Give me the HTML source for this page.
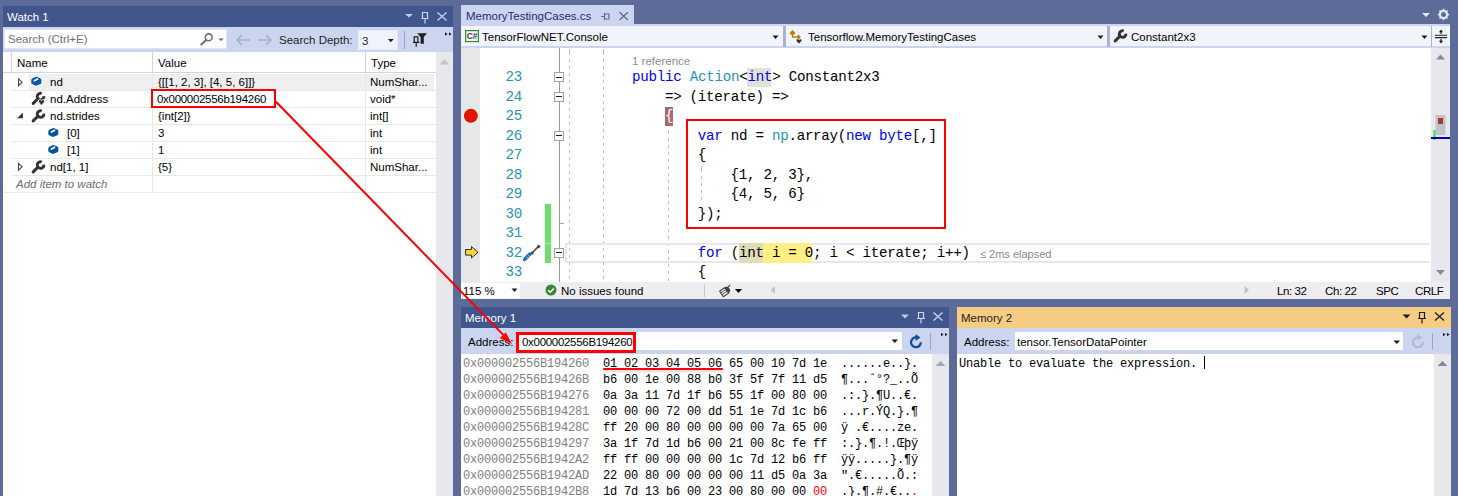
<!DOCTYPE html>
<html><head><meta charset="utf-8">
<style>
*{box-sizing:border-box}
html,body{margin:0;padding:0}
body{width:1458px;height:496px;position:relative;overflow:hidden;background:#5D6B99;font-family:"Liberation Sans",sans-serif;font-size:11.5px;color:#000}
.a{position:absolute}
.t{position:absolute;white-space:pre;line-height:14px}
.mono{font-family:"Liberation Mono",monospace}
.code{position:absolute;white-space:pre;font-family:"Liberation Mono",monospace;font-size:14.2px;letter-spacing:-0.27px;line-height:19px;color:#000}
.mem{position:absolute;white-space:pre;font-family:"Liberation Mono",monospace;font-size:12px;letter-spacing:-0.2px;line-height:17px;color:#000}
.kw{color:#0000FF}
.ty{color:#2B91AF}
.ln{position:absolute;white-space:pre;font-family:"Liberation Mono",monospace;font-size:14.2px;letter-spacing:-0.27px;line-height:19px;color:#2B91AF;text-align:right;width:60px;left:462px}
</style></head><body>

<!-- ================= WATCH PANEL ================= -->
<div class="a" style="left:3px;top:6px;width:450px;height:490px;background:#fff"></div>
<div class="a" style="left:3px;top:6px;width:450px;height:21px;background:#40568D"></div>
<div class="t" style="left:7px;top:10px;color:#fff">Watch 1</div>
<!-- toolbar -->
<div class="a" style="left:3px;top:27px;width:450px;height:25px;background:#CCD5F0"></div>
<div class="a" style="left:4px;top:29px;width:223px;height:20px;background:#fff;border:1px solid #E3E6F0"></div>
<div class="t" style="left:8px;top:32px;color:#717171">Search (Ctrl+E)</div>
<!-- header -->
<div class="a" style="left:3px;top:52px;width:433px;height:21px;background:#fff;border-bottom:1px solid #CCD5F0"></div>
<div class="a" style="left:11px;top:52px;width:1px;height:20px;background:#CCD5F0"></div>
<div class="a" style="left:152px;top:52px;width:1px;height:20px;background:#CCD5F0"></div>
<div class="a" style="left:365px;top:52px;width:1px;height:20px;background:#CCD5F0"></div>
<div class="t" style="left:17px;top:56px">Name</div>
<div class="t" style="left:158px;top:56px">Value</div>
<div class="t" style="left:371px;top:56px">Type</div>
<!-- scrollbar -->
<div class="a" style="left:436px;top:52px;width:17px;height:444px;background:#E8E8EC"></div>
<svg class="a" style="left:436px;top:52px" width="17" height="20"><path d="M3.5 12.5h10l-5-5z" fill="#C2C3C9"/></svg>

<!-- title icons -->
<svg class="a" style="left:400px;top:8px" width="53" height="18">
 <path d="M5 6h8l-4 3.6z" fill="#C2CAE2"/>
 <path d="M22.5 4.5h5v6h-5z M21.5 10.5h7 M25 10.5v5" stroke="#CCD3EA" stroke-width="1.2" fill="none"/>
 <path d="M37.5 4.5l9 8 M46.5 4.5l-9 8" stroke="#CCD3EA" stroke-width="1.3" fill="none"/>
</svg>
<!-- search icons -->
<svg class="a" style="left:196px;top:30px" width="260" height="20">
 <circle cx="12.7" cy="7.3" r="3.4" stroke="#717171" stroke-width="1.6" fill="none"/>
 <path d="M10.3 9.8l-5.5 5.3" stroke="#717171" stroke-width="2.1"/>
 <path d="M22.3 8.4h5.5l-2.75 2.7z" fill="#717171"/>
 <path d="M41 10h13 M46 5l-5 5 5 5" stroke="#A6AEC9" stroke-width="1.5" fill="none"/>
 <path d="M62 10h13 M70 5l5 5-5 5" stroke="#A6AEC9" stroke-width="1.5" fill="none"/>
</svg>
<div class="t" style="left:279px;top:33px;color:#1E1E1E">Search Depth:</div>
<div class="a" style="left:358px;top:30px;width:40px;height:20px;background:#F0F3FB;border:1px solid #E4E9F7"></div>
<div class="t" style="left:362px;top:34px;color:#1E1E1E">3</div>
<svg class="a" style="left:386px;top:30px" width="70" height="22">
 <path d="M1.8 8.9h6l-3 3.3z" fill="#1E1E1E"/>
 <path d="M18.5 1v18" stroke="#98A4CC" stroke-width="1"/>
 <path d="M28.2 6.8h3.6v5.6h-3.6z M27 12.4h6.4 M30.2 12.4v4.4" stroke="#1E1E1E" stroke-width="1.2" fill="none"/>
 <path d="M31.2 3.2h9.8l-3.2 3.8v6.8h-3.2v-6.8z" fill="#1E1E1E"/>
 <path d="M59 2.3l2.6 1.7-2.6 1.7z M63 2.3l2.6 1.7-2.6 1.7z" fill="#1E1E1E"/>
</svg>
<!-- rows -->
<div class="a" style="left:29px;top:74px;width:405px;height:16px;background:#EFEFEF"></div>
<div class="a" style="left:12px;top:90px;width:424px;height:1px;background:#E8E8E8"></div>
<div class="a" style="left:12px;top:107px;width:424px;height:1px;background:#E8E8E8"></div>
<div class="a" style="left:12px;top:124px;width:424px;height:1px;background:#E8E8E8"></div>
<div class="a" style="left:12px;top:141px;width:424px;height:1px;background:#E8E8E8"></div>
<div class="a" style="left:12px;top:158px;width:424px;height:1px;background:#E8E8E8"></div>
<div class="a" style="left:12px;top:175px;width:424px;height:1px;background:#E8E8E8"></div>
<div class="a" style="left:4px;top:192px;width:432px;height:1px;background:#E8E8E8"></div>
<div class="a" style="left:152px;top:73px;width:1px;height:119px;background:#E8E8E8"></div>
<div class="a" style="left:365px;top:73px;width:1px;height:119px;background:#E8E8E8"></div>
<div class="t" style="left:50px;top:75px">nd</div>
<div class="t" style="left:158px;top:75px">{[[1, 2, 3], [4, 5, 6]]}</div>
<div class="t" style="left:370px;top:75px">NumShar...</div>
<div class="t" style="left:50px;top:92px">nd.Address</div>
<div class="t" style="left:157px;top:92px;letter-spacing:-0.3px">0x000002556b194260</div>
<div class="t" style="left:370px;top:92px">void*</div>
<div class="t" style="left:50px;top:109px">nd.strides</div>
<div class="t" style="left:158px;top:109px">{int[2]}</div>
<div class="t" style="left:370px;top:109px">int[]</div>
<div class="t" style="left:67px;top:126px">[0]</div>
<div class="t" style="left:158px;top:126px">3</div>
<div class="t" style="left:370px;top:126px">int</div>
<div class="t" style="left:67px;top:143px">[1]</div>
<div class="t" style="left:158px;top:143px">1</div>
<div class="t" style="left:370px;top:143px">int</div>
<div class="t" style="left:50px;top:160px">nd[1, 1]</div>
<div class="t" style="left:158px;top:160px">{5}</div>
<div class="t" style="left:370px;top:160px">NumShar...</div>
<div class="t" style="left:16px;top:177px;color:#6D6D6D;font-style:italic">Add item to watch</div>
<!-- row icons -->
<svg width="0" height="0" style="position:absolute">
 <defs>
  <g id="cube"><path d="M0.3 3.4Q0.3 2.4 1.3 1.8L4.6 0.2Q5.4 -0.2 6.3 0.2L9.4 1.6Q10.3 2.1 10.3 3.1V5.9Q10.3 6.8 9.4 7.3L5.6 8.8Q4.9 9.1 4.2 8.8L1.2 7.3Q0.3 6.8 0.3 5.9z" fill="#0A54A6"/><path d="M3.4 4L6.6 2.2" stroke="#fff" stroke-width="1.6" stroke-linecap="round"/></g>
  <g id="wrench"><path d="M1.7 10.9L6.6 6" stroke="#333" stroke-width="3" stroke-linecap="round"/><path d="M12.3 3.6A3.3 3.3 0 1 1 10.2 1.0" stroke="#333" stroke-width="2.9" fill="none"/></g>
 </defs>
</svg>
<svg class="a" style="left:12px;top:73px" width="60" height="120">
 <path d="M6.5 5.8l3.6 3.4-3.6 3.4z" fill="none" stroke="#444" stroke-width="1.1"/>
 <path d="M6.5 90.4l3.6 3.4-3.6 3.4z" fill="none" stroke="#444" stroke-width="1.1"/>
 <path d="M10.9 39.5l-5.8 5.7h5.8z" fill="#333"/>
 <use href="#cube" x="19" y="3.8"/>
 <use href="#cube" x="36" y="55"/>
 <use href="#cube" x="36" y="72"/>
 <use href="#wrench" x="19.5" y="19.5"/>
 <path d="M29.5 27.6c1.1-1.6 3.2-1.3 3.2 0.5 0 1.3-1.8 2.8-3.2 4.2-1.4-1.4-3.2-2.9-3.2-4.2 0-1.8 2.1-2.1 3.2-0.5z" fill="#333" stroke="#fff" stroke-width="1"/>
 <use href="#wrench" x="19.5" y="37"/>
 <use href="#wrench" x="19.5" y="88"/>
</svg>
<!-- red box -->
<div class="a" style="left:151px;top:89px;width:125px;height:19px;border:2px solid #FF0000"></div>


<!-- ================= EDITOR ================= -->
<div class="a" style="left:461px;top:5px;width:173px;height:21px;background:#CCD5F0"></div>
<div class="t" style="left:466px;top:9px;color:#1E2C70">MemoryTestingCases.cs</div>
<div class="a" style="left:461px;top:24px;width:989px;height:2px;background:#CCD5F0"></div>
<div class="a" style="left:461px;top:26px;width:989px;height:22px;background:#F2F4FB;border-bottom:2px solid #CCD5F0"></div>
<div class="a" style="left:461px;top:48px;width:989px;height:234px;background:#fff"></div>
<div class="a" style="left:461px;top:48px;width:19px;height:234px;background:#E6E7E8"></div>
<div class="a" style="left:1431px;top:48px;width:19px;height:234px;background:#E8E8EC"></div>
<div class="a" style="left:461px;top:282px;width:989px;height:17px;background:#EEEEF2"></div>

<!-- tab icons -->
<svg class="a" style="left:598px;top:10px" width="36" height="14">
 <path d="M3 6.5h3.5 M6.5 3v7 M6.5 4h4.5v5h-4.5" stroke="#5B6A93" stroke-width="1.2" fill="none"/>
 <path d="M21.5 2.3l8.4 7.6 M29.9 2.3l-8.4 7.6" stroke="#5B6A93" stroke-width="1.3" fill="none"/>
</svg>
<!-- nav bar -->
<svg class="a" style="left:465px;top:30px" width="15" height="13"><rect x="0.6" y="0.6" width="12.8" height="11" fill="#F4F4F8" stroke="#388A34" stroke-width="1.2"/><text x="1.8" y="9.2" font-family="Liberation Sans" font-size="8.5" font-weight="bold" fill="#3A3A3A" letter-spacing="-0.3">C#</text></svg>
<div class="t" style="left:482px;top:30px">TensorFlowNET.Console</div>
<svg class="a" style="left:772px;top:35px" width="10" height="6"><path d="M0.5 0.5h6l-3 3.5z" fill="#1E1E1E"/></svg>
<div class="a" style="left:783px;top:26px;width:3px;height:21px;background:#A8B3D6"></div>
<svg class="a" style="left:788px;top:28px" width="18" height="16">
 <path d="M1.5 5l3-3 3 3-3 3z M8 9l2.5-2.5 2.5 2.5-2.5 2.5z" fill="#C27D0E"/>
 <path d="M4.5 5v4h4" stroke="#C27D0E" stroke-width="1.3" fill="none"/>
 <path d="M11 12c0.8-1.2 2.6-1.1 2.6 0.3 0 1-1.5 2.2-2.6 3.3-1.1-1.1-2.6-2.3-2.6-3.3 0-1.4 1.8-1.5 2.6-0.3z" fill="#333"/>
</svg>
<div class="t" style="left:808px;top:30px">Tensorflow.MemoryTestingCases</div>
<svg class="a" style="left:1097px;top:35px" width="10" height="6"><path d="M0.5 0.5h6l-3 3.5z" fill="#1E1E1E"/></svg>
<div class="a" style="left:1107px;top:26px;width:3px;height:21px;background:#A8B3D6"></div>
<svg class="a" style="left:1113px;top:29px" width="16" height="15"><use href="#wrench" x="0.5" y="1"/></svg>
<div class="t" style="left:1131px;top:30px">Constant2x3</div>
<svg class="a" style="left:1421px;top:35px" width="10" height="6"><path d="M0.5 0.5h6l-3 3.5z" fill="#1E1E1E"/></svg>
<div class="a" style="left:1431px;top:26px;width:1px;height:21px;background:#A8B3D6"></div>
<svg class="a" style="left:1432px;top:26px" width="18" height="21">
 <path d="M3 9.2h12 M3 11.6h12" stroke="#1E1E1E" stroke-width="1.1"/>
 <path d="M9 4.5v3.5 M9 13v3.5" stroke="#1E1E1E" stroke-width="1.2"/>
 <path d="M6.8 6.3l2.2-2.6 2.2 2.6z M6.8 14.7l2.2 2.6 2.2-2.6z" fill="#1E1E1E"/>
</svg>

<!-- margins -->
<div class="a" style="left:559px;top:48px;width:1px;height:234px;background:#9A9A9A"></div>
<div class="a" style="left:560px;top:223px;width:4px;height:1px;background:#A5A5A5"></div>
<div class="a" style="left:554px;top:72.35px;width:10px;height:10px;background:#fff;border:1px solid #A0A0A0"></div>
<div class="a" style="left:556px;top:76.85px;width:6px;height:1px;background:#1E1E1E"></div>
<div class="a" style="left:554px;top:91.85px;width:10px;height:10px;background:#fff;border:1px solid #A0A0A0"></div>
<div class="a" style="left:556px;top:96.35px;width:6px;height:1px;background:#1E1E1E"></div>
<div class="a" style="left:554px;top:130.85px;width:10px;height:10px;background:#fff;border:1px solid #A0A0A0"></div>
<div class="a" style="left:556px;top:135.35px;width:6px;height:1px;background:#1E1E1E"></div>
<div class="a" style="left:554px;top:247.85px;width:10px;height:10px;background:#fff;border:1px solid #A0A0A0"></div>
<div class="a" style="left:556px;top:252.35px;width:6px;height:1px;background:#1E1E1E"></div>
<div class="a" style="left:569px;top:48px;width:1px;height:234px;background:repeating-linear-gradient(to bottom,#BDBDBD 0 3px,transparent 3px 7px);background-position:0 4px"></div>
<div class="a" style="left:603px;top:48px;width:1px;height:234px;background:repeating-linear-gradient(to bottom,#BDBDBD 0 3px,transparent 3px 7px);background-position:0 4px"></div>
<div class="a" style="left:668px;top:127px;width:1px;height:155px;background:repeating-linear-gradient(to bottom,#BDBDBD 0 3px,transparent 3px 7px);background-position:0 4px"></div>
<div class="a" style="left:701px;top:165px;width:1px;height:38px;background:repeating-linear-gradient(to bottom,#BDBDBD 0 3px,transparent 3px 7px);background-position:0 4px"></div>
<div class="a" style="left:545px;top:204px;width:6px;height:59px;background:#6CE06A"></div>
<div class="a" style="left:545px;top:243px;width:6px;height:1px;background:#A8EEA6"></div>
<div class="a" style="left:565px;top:243.25px;width:865px;height:19.5px;border:2px solid #E6E8F0;border-right:none"></div>
<div class="a" style="left:746.90px;top:67.75px;width:24.60px;height:19.5px;background:#E0E3D6"></div>
<div class="a" style="left:738.70px;top:242.75px;width:73.80px;height:20px;background:#FFEF85"></div>
<div class="a" style="left:738.70px;top:242.75px;width:24.60px;height:20px;background:#DEDDB8"></div>
<div class="a" style="left:665px;top:106.5px;width:8px;height:19.5px;background:#A66A6E"></div>
<div class="ln" style="top:68.15px;height:19.5px;line-height:19.5px">23</div>
<div class="ln" style="top:87.65px;height:19.5px;line-height:19.5px">24</div>
<div class="ln" style="top:107.15px;height:19.5px;line-height:19.5px">25</div>
<div class="ln" style="top:126.65px;height:19.5px;line-height:19.5px">26</div>
<div class="ln" style="top:146.15px;height:19.5px;line-height:19.5px">27</div>
<div class="ln" style="top:165.65px;height:19.5px;line-height:19.5px">28</div>
<div class="ln" style="top:185.15px;height:19.5px;line-height:19.5px">29</div>
<div class="ln" style="top:204.65px;height:19.5px;line-height:19.5px">30</div>
<div class="ln" style="top:224.15px;height:19.5px;line-height:19.5px">31</div>
<div class="ln" style="top:243.65px;height:19.5px;line-height:19.5px">32</div>
<div class="ln" style="top:263.15px;height:19.5px;line-height:19.5px">33</div>
<div class="t" style="left:632px;top:54px;font-size:11.5px;color:#8E8E8E">1 reference</div>
<div class="code" style="left:632.10px;top:68.15px;height:19.5px;line-height:19.5px"><span class="kw">public</span> <span class="ty">Action</span>&lt;<span class="kw">int</span>&gt; Constant2x3</div>
<div class="code" style="left:664.90px;top:87.65px;height:19.5px;line-height:19.5px">=&gt; (iterate) =&gt;</div>
<div class="code" style="left:664.90px;top:107.15px;height:19.5px;line-height:19.5px"><span style="color:#fff">{</span></div>
<div class="code" style="left:697.70px;top:126.65px;height:19.5px;line-height:19.5px"><span class="kw">var</span> nd = <span class="ty">np</span>.array(<span class="kw">new</span> <span class="kw">byte</span>[,]</div>
<div class="code" style="left:697.70px;top:146.15px;height:19.5px;line-height:19.5px">{</div>
<div class="code" style="left:730.50px;top:165.65px;height:19.5px;line-height:19.5px">{1, 2, 3},</div>
<div class="code" style="left:730.50px;top:185.15px;height:19.5px;line-height:19.5px">{4, 5, 6}</div>
<div class="code" style="left:697.70px;top:204.65px;height:19.5px;line-height:19.5px">});</div>
<div class="code" style="left:697.70px;top:243.65px;height:19.5px;line-height:19.5px"><span class="kw">for</span> (int i = 0; i &lt; iterate; i++)</div>
<div class="code" style="left:697.70px;top:263.15px;height:19.5px;line-height:19.5px">{</div>
<div class="t" style="left:980px;top:247px;font-size:11px;color:#8A8A8A">≤ 2ms elapsed</div>
<svg class="a" style="left:461px;top:100px" width="20" height="170"><circle cx="9.85" cy="15.85" r="7" fill="#E51400"/><path d="M4.5 149.5h6v-3l6.5 5.8-6.5 5.8v-3h-6z" fill="#F8D334" stroke="#333" stroke-width="1"/></svg>
<svg class="a" style="left:523px;top:244px" width="18" height="18">
 <path d="M9 9l6.2-6.2" stroke="#424242" stroke-width="1.6"/>
 <path d="M15.6 0.6l2 2-1.8 1.8-2-2z" fill="#424242"/>
 <path d="M8.2 8.2l1.8 1.8" stroke="#424242" stroke-width="2.6"/>
 <path d="M2.6 17a1.9 1.9 0 0 1-2.6-2.6l6.4-6.4 2.6 2.6z" fill="#1F71C6"/>
 <path d="M3.6 12.8l1.8 1.8 M5.2 11.2l1.8 1.8" stroke="#BFD8F2" stroke-width="0.8"/>
</svg>
<div class="a" style="left:686px;top:119px;width:260px;height:110px;border:2px solid #FF0000"></div>
<svg class="a" style="left:1431px;top:48px" width="19" height="234">
 <path d="M5 11.5h9l-4.5-5z" fill="#868999"/>
 <path d="M5 222h9l-4.5 5z" fill="#868999"/>
 <rect x="4.5" y="67" width="10" height="20" fill="#C2C3C9"/>
 <rect x="7" y="70" width="5" height="6" fill="#A83838"/>
 <rect x="2" y="82" width="3" height="10" fill="#6CE06A"/>
 <rect x="0" y="89" width="19" height="2" fill="#0000C8"/>
</svg>

<div class="a" style="left:461px;top:283px;width:59px;height:15px;background:#fff"></div>
<div class="t" style="left:463px;top:284px">115 %</div>
<svg class="a" style="left:511px;top:288px" width="8" height="5"><path d="M0.5 0.5h6l-3 3.5z" fill="#1E1E1E"/></svg>
<svg class="a" style="left:545px;top:284px" width="12" height="12"><circle cx="6" cy="6" r="5.5" fill="#388A34"/><path d="M3.2 6.2l2 2 3.6-3.8" stroke="#fff" stroke-width="1.5" fill="none"/></svg>
<div class="t" style="left:561px;top:284px">No issues found</div>
<div class="a" style="left:704px;top:284px;width:1px;height:13px;background:#C9C9D1"></div>
<svg class="a" style="left:716px;top:283px" width="28" height="15">
 <path d="M3.6 8.2l5.2-3.6 3.8 5.6-5.2 3.6z" fill="none" stroke="#424242" stroke-width="1.1"/>
 <path d="M4.8 10l5.3-3.7 M6 11.8l5.3-3.7" stroke="#424242" stroke-width="0.9"/>
 <path d="M8.3 4.9a3.3 3.3 0 0 1 4.6 5z" fill="#424242"/>
 <path d="M11 5l3.2-3.2" stroke="#424242" stroke-width="1.1"/>
 <path d="M19 6h7l-3.5 4z" fill="#000"/>
</svg>
<svg class="a" style="left:770px;top:285px" width="6" height="10"><path d="M5 1v8l-4.5-4z" fill="#C2C3C9"/></svg>
<svg class="a" style="left:1244px;top:285px" width="6" height="10"><path d="M0.5 1v8l4.5-4z" fill="#C2C3C9"/></svg>
<div class="t" style="left:1277px;top:284px;letter-spacing:-0.4px">Ln: 32</div>
<div class="t" style="left:1325px;top:284px;letter-spacing:-0.4px">Ch: 22</div>
<div class="t" style="left:1376px;top:284px;letter-spacing:-0.4px">SPC</div>
<div class="t" style="left:1415px;top:284px;letter-spacing:-0.4px">CRLF</div>

<svg class="a" style="left:1418px;top:8px" width="32" height="14">
 <path d="M4 5h8l-4 4z" fill="#E4E8F4"/>
 <circle cx="25.5" cy="6.5" r="3.6" fill="none" stroke="#E4E8F4" stroke-width="2.2"/>
 <path d="M25.5 0.8v2 M25.5 10.2v2 M19.8 6.5h2 M29.2 6.5h2 M21.5 2.5l1.4 1.4 M28.1 9.1l1.4 1.4 M21.5 10.5l1.4-1.4 M28.1 3.9l1.4-1.4" stroke="#E4E8F4" stroke-width="1.6"/>
</svg>
<!-- ================= MEMORY 1 ================= -->
<div class="a" style="left:461px;top:307px;width:488px;height:189px;background:#fff"></div>
<div class="a" style="left:461px;top:307px;width:488px;height:21px;background:#40568D"></div>
<div class="t" style="left:465px;top:311px;color:#fff">Memory 1</div>
<div class="a" style="left:461px;top:328px;width:488px;height:26px;background:#CCD5F0"></div>
<div class="a" style="left:932px;top:354px;width:17px;height:142px;background:#E8E8EC"></div>

<!-- ================= MEMORY 2 ================= -->
<div class="a" style="left:957px;top:307px;width:494px;height:189px;background:#fff"></div>
<div class="a" style="left:957px;top:307px;width:494px;height:21px;background:#F5CC84"></div>
<div class="t" style="left:961px;top:311px;color:#1E1E1E">Memory 2</div>
<div class="a" style="left:957px;top:328px;width:494px;height:26px;background:#CCD5F0"></div>
<div class="a" style="left:1434px;top:354px;width:17px;height:142px;background:#E8E8EC"></div>

<!-- memory1 title icons -->
<svg class="a" style="left:896px;top:308px" width="53" height="18">
 <path d="M5 6.5h8l-4 4z" fill="#C2CAE2"/>
 <path d="M22.5 4.5h5v6h-5z M21 10.5h8 M25 10.5v5" stroke="#CCD3EA" stroke-width="1.2" fill="none"/>
 <path d="M37.5 4.5l9 8 M46.5 4.5l-9 8" stroke="#CCD3EA" stroke-width="1.3" fill="none"/>
</svg>
<div class="t" style="left:468px;top:335px">Address:</div>
<div class="a" style="left:516px;top:332px;width:386px;height:18px;background:#fff"></div>
<div class="a" style="left:516px;top:332px;width:120px;height:21px;border:3px solid #FF0000"></div>
<div class="t" style="left:522px;top:335px;letter-spacing:-0.3px">0x000002556B194260</div>
<svg class="a" style="left:891px;top:339px" width="8" height="5"><path d="M0.5 0.5h6.5l-3.25 3.5z" fill="#1E1E1E"/></svg>
<svg class="a" style="left:908px;top:333px" width="45" height="20">
 <path d="M12.8 9.3A4.9 4.9 0 1 1 8.4 4.4" stroke="#0E4C96" stroke-width="2.3" fill="none"/>
 <path d="M7.6 0.9l4.8 3.5-4.8 3.5z" fill="#0E4C96"/>
 <path d="M22.5 -0.5v17" stroke="#98A4CC" stroke-width="1"/>
 <path d="M33 -0.2l2.6 1.7-2.6 1.7z M37 -0.2l2.6 1.7-2.6 1.7z" fill="#1E1E1E"/>
</svg>
<svg class="a" style="left:932px;top:354px" width="17" height="16"><path d="M3.5 12h10l-5-5z" fill="#A4A6B4"/></svg>

<div class="mem" style="left:463px;top:355.5px;color:#808080">0x000002556B194260</div>
<div class="mem" style="left:603px;top:355.5px">01 02 03 04 05 06 65 00 10 7d 1e</div>
<div class="mem" style="left:841px;top:355.5px">......e..}.</div>
<div class="mem" style="left:463px;top:371.5px;color:#808080">0x000002556B19426B</div>
<div class="mem" style="left:603px;top:371.5px">b6 00 1e 00 88 b0 3f 5f 7f 11 d5</div>
<div class="mem" style="left:841px;top:371.5px">¶...ˆ°?_..Õ</div>
<div class="mem" style="left:463px;top:387.5px;color:#808080">0x000002556B194276</div>
<div class="mem" style="left:603px;top:387.5px">0a 3a 11 7d 1f b6 55 1f 00 80 00</div>
<div class="mem" style="left:841px;top:387.5px">.:.}.¶U..€.</div>
<div class="mem" style="left:463px;top:403.5px;color:#808080">0x000002556B194281</div>
<div class="mem" style="left:603px;top:403.5px">00 00 00 72 00 dd 51 1e 7d 1c b6</div>
<div class="mem" style="left:841px;top:403.5px">...r.ÝQ.}.¶</div>
<div class="mem" style="left:463px;top:419.5px;color:#808080">0x000002556B19428C</div>
<div class="mem" style="left:603px;top:419.5px">ff 20 00 80 00 00 00 00 7a 65 00</div>
<div class="mem" style="left:841px;top:419.5px">ÿ .€....ze.</div>
<div class="mem" style="left:463px;top:435.5px;color:#808080">0x000002556B194297</div>
<div class="mem" style="left:603px;top:435.5px">3a 1f 7d 1d b6 00 21 00 8c fe ff</div>
<div class="mem" style="left:841px;top:435.5px">:.}.¶.!.Œþÿ</div>
<div class="mem" style="left:463px;top:451.5px;color:#808080">0x000002556B1942A2</div>
<div class="mem" style="left:603px;top:451.5px">ff ff 00 00 00 00 1c 7d 12 b6 ff</div>
<div class="mem" style="left:841px;top:451.5px">ÿÿ.....}.¶ÿ</div>
<div class="mem" style="left:463px;top:467.5px;color:#808080">0x000002556B1942AD</div>
<div class="mem" style="left:603px;top:467.5px">22 00 80 00 00 00 00 11 d5 0a 3a</div>
<div class="mem" style="left:841px;top:467.5px">&quot;.€.....Õ.:</div>
<div class="mem" style="left:463px;top:483.5px;color:#808080">0x000002556B1942B8</div>
<div class="mem" style="left:603px;top:483.5px">1d 7d 13 b6 00 23 00 80 00 00 <span style="color:#FF0000">00</span></div>
<div class="mem" style="left:841px;top:483.5px">.}.¶.#.€..<span style="color:#FF0000">.</span></div>
<div class="a" style="left:603px;top:368.4px;width:120px;height:1.7px;background:#FF0000;border-radius:1px;box-shadow:1px 2px 2px rgba(0,0,0,0.15)"></div>
<!-- memory2 -->
<svg class="a" style="left:1398px;top:308px" width="53" height="18">
 <path d="M4.5 6.5h8l-4 4z" fill="#1E1E1E"/>
 <path d="M21.5 4.5h5v6h-5z M20 10.5h8 M24 10.5v5" stroke="#1E1E1E" stroke-width="1.2" fill="none"/>
 <path d="M37 4.5l9 8 M46 4.5l-9 8" stroke="#1E1E1E" stroke-width="1.3" fill="none"/>
</svg>
<div class="t" style="left:964px;top:335px">Address:</div>
<div class="a" style="left:1015px;top:332px;width:388px;height:18px;background:#fff"></div>
<div class="t" style="left:1017px;top:335px">tensor.TensorDataPointer</div>
<svg class="a" style="left:1393px;top:340px" width="8" height="5"><path d="M0.5 0.5h6.5l-3.25 3.5z" fill="#1E1E1E"/></svg>
<svg class="a" style="left:1410px;top:333px" width="45" height="20">
 <path d="M12.8 9.3A4.9 4.9 0 1 1 8.4 4.4" stroke="#B4B9CC" stroke-width="2.3" fill="none"/>
 <path d="M7.6 0.9l4.8 3.5-4.8 3.5z" fill="#B4B9CC"/>
 <path d="M22.5 -0.5v17" stroke="#98A4CC" stroke-width="1"/>
 <path d="M33 -0.2l2.6 1.7-2.6 1.7z M37 -0.2l2.6 1.7-2.6 1.7z" fill="#1E1E1E"/>
</svg>
<div class="mem" style="left:959px;top:355.5px">Unable to evaluate the expression. </div>
<div class="a" style="left:1204px;top:356px;width:1px;height:13px;background:#000"></div>
<svg class="a" style="left:1434px;top:354px" width="17" height="16"><path d="M3.5 12h10l-5-5z" fill="#868999"/></svg>
<!-- arrow -->
<svg class="a" style="left:0;top:0" width="1458" height="496">
 <path d="M276 101.8L504 335.6" stroke="#FF0000" stroke-width="2" fill="none"/>
 <path d="M512 344L499.7 337.9 505.8 332.5z" fill="#FF0000"/>
</svg>

</body></html>
